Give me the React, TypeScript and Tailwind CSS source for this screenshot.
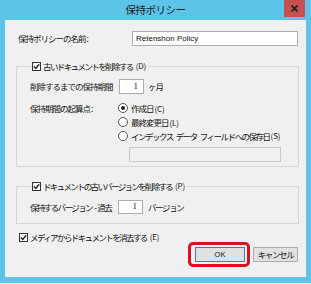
import React from "react";

const jp = "font-['Noto_Sans_CJK_JP','Noto_Sans',sans-serif] whitespace-nowrap";

const Check = () => (
  <span className="w-[9px] h-[9px] border border-[#333] bg-white flex items-center justify-center shrink-0">
    <svg width="7" height="7" viewBox="0 0 7 7">
      <path d="M0.8 3.4 L2.8 5.4 L6.2 1.2" fill="none" stroke="#222" strokeWidth="1.4" />
    </svg>
  </span>
);

const Radio = ({ on }: { on?: boolean }) => (
  <span className="w-[10px] h-[10px] rounded-full border border-[#555] bg-white flex items-center justify-center shrink-0">
    {on && <span className="w-[4px] h-[4px] rounded-full bg-[#222]" />}
  </span>
);

const Key = ({ k }: { k: string }) => (
  <span className="tracking-[-0.2px] text-[8px] ml-[1px]">({k})</span>
);

export default function App() {
  return (
    <div className={`w-[311px] h-[284px] bg-[#5dc4e9] flex flex-col border-b border-b-[#e8f6fc] text-[#111] ${jp}`}>
      <div className="h-[20px] relative flex items-center justify-center text-[10.5px] tracking-[-0.5px] text-[#1a1a1a]">
        保持ポリシー
        <div className="absolute right-[6px] top-0 w-[21px] h-[17px] bg-[#c75050] flex items-center justify-center">
          <svg width="7" height="7" viewBox="0 0 7 7">
            <path d="M0.5 0.5 L6.5 6.5 M6.5 0.5 L0.5 6.5" stroke="#222" strokeWidth="1.8" />
          </svg>
        </div>
      </div>

      <div className="mx-[5px] h-[257px] bg-[#f0f0f0] flex flex-col pt-[11px] pl-[11px] pr-[8px] text-[8.5px] tracking-[-1px]">
        <div className="flex items-center h-[15px]">
          <span className="w-[116px] pl-[2px]">保持ポリシーの名前 :</span>
          <div className="flex-1 h-[15px] border border-[#abadb3] bg-white flex items-center pl-[3px] text-[8px] tracking-normal font-['Liberation_Sans',sans-serif]">
            Retenshon Policy
          </div>
        </div>

        <fieldset className="mt-[14px] border border-[#d5d5d5] w-[283px] pl-[13px] pb-[4px]">
          <legend className="ml-[2px] pr-[2px] h-[12px] flex items-center gap-[2px]">
            <Check />
            <span className="tracking-[-1.6px]">古いドキュメントを削除する</span>
            <Key k="D" />
          </legend>
          <div className="mt-[7px] flex items-center h-[15px]">
            <span className="w-[89px] shrink-0">削除するまでの保持期間</span>
            <div className="w-[25px] h-[15px] border border-[#abadb3] bg-white flex items-center justify-end pr-[5px] text-[9px] tracking-normal font-['Liberation_Serif',serif]">
              1
            </div>
            <span className="ml-[4px]">ヶ月</span>
          </div>
          <div className="flex mt-[7px]">
            <span className="w-[88px] shrink-0 h-[14px] flex items-center">保持期間の起算点 :</span>
            <div className="flex flex-col">
              <div className="h-[14px] flex items-center gap-[3px]">
                <Radio on />
                <span>作成日<Key k="C" /></span>
              </div>
              <div className="h-[14px] flex items-center gap-[3px]">
                <Radio />
                <span>最終変更日<Key k="L" /></span>
              </div>
              <div className="h-[14px] flex items-center gap-[3px]">
                <Radio />
                <span className="tracking-[-1.5px] flex items-center">
                  インデックス<span className="w-[3px]" />データ<span className="w-[3px]" />フィールドへの保存日<Key k="S" />
                </span>
              </div>
              <div className="mt-[4px] ml-[11px] w-[152px] h-[15px] border border-[#c8c8c8] bg-[#f0f0f0]" />
            </div>
          </div>
        </fieldset>

        <fieldset className="mt-[13px] border border-[#d5d5d5] w-[283px] pl-[13px] pb-[9px]">
          <legend className="ml-[2px] pr-[2px] h-[12px] flex items-center gap-[2px]">
            <Check />
            <span className="tracking-[-1.7px]">ドキュメントの古いバージョンを削除する</span>
            <Key k="P" />
          </legend>
          <div className="mt-[8px] flex items-center h-[14px]">
            <span className="w-[88px] shrink-0 tracking-[-1.6px] flex items-center">
              保持するバージョン<span className="w-[2px]" />-<span className="w-[2px]" />過去
            </span>
            <div className="w-[25px] h-[14px] border border-[#abadb3] bg-white flex items-center justify-end pr-[5px] text-[9px] tracking-normal font-['Liberation_Serif',serif]">
              1
            </div>
            <span className="ml-[5px] tracking-[-1.4px]">バージョン</span>
          </div>
        </fieldset>

        <div className="mt-[7px] h-[12px] flex items-center gap-[2px] pl-[3px]">
          <Check />
          <span className="tracking-[-1.6px]">メディアからドキュメントを消去する</span>
          <Key k="E" />
        </div>

        <div className="mt-[4px] flex justify-end gap-[8px]">
          <div className="relative">
            <button className="w-[50px] h-[15px] border border-[#3c7fb1] bg-[#e1e1e1] text-[7.5px] tracking-normal font-['Liberation_Sans',sans-serif] flex items-center justify-center">
              OK
            </button>
            <div className="absolute -left-[7px] -top-[5px] -right-[5px] -bottom-[5px] border-[3px] border-[#d9101e] rounded-[5px]" />
          </div>
          <button className="w-[45px] h-[15px] border border-[#adadad] bg-[#e1e1e1] flex items-center justify-center tracking-[-1.4px]">
            キャンセル
          </button>
        </div>
      </div>
    </div>
  );
}
